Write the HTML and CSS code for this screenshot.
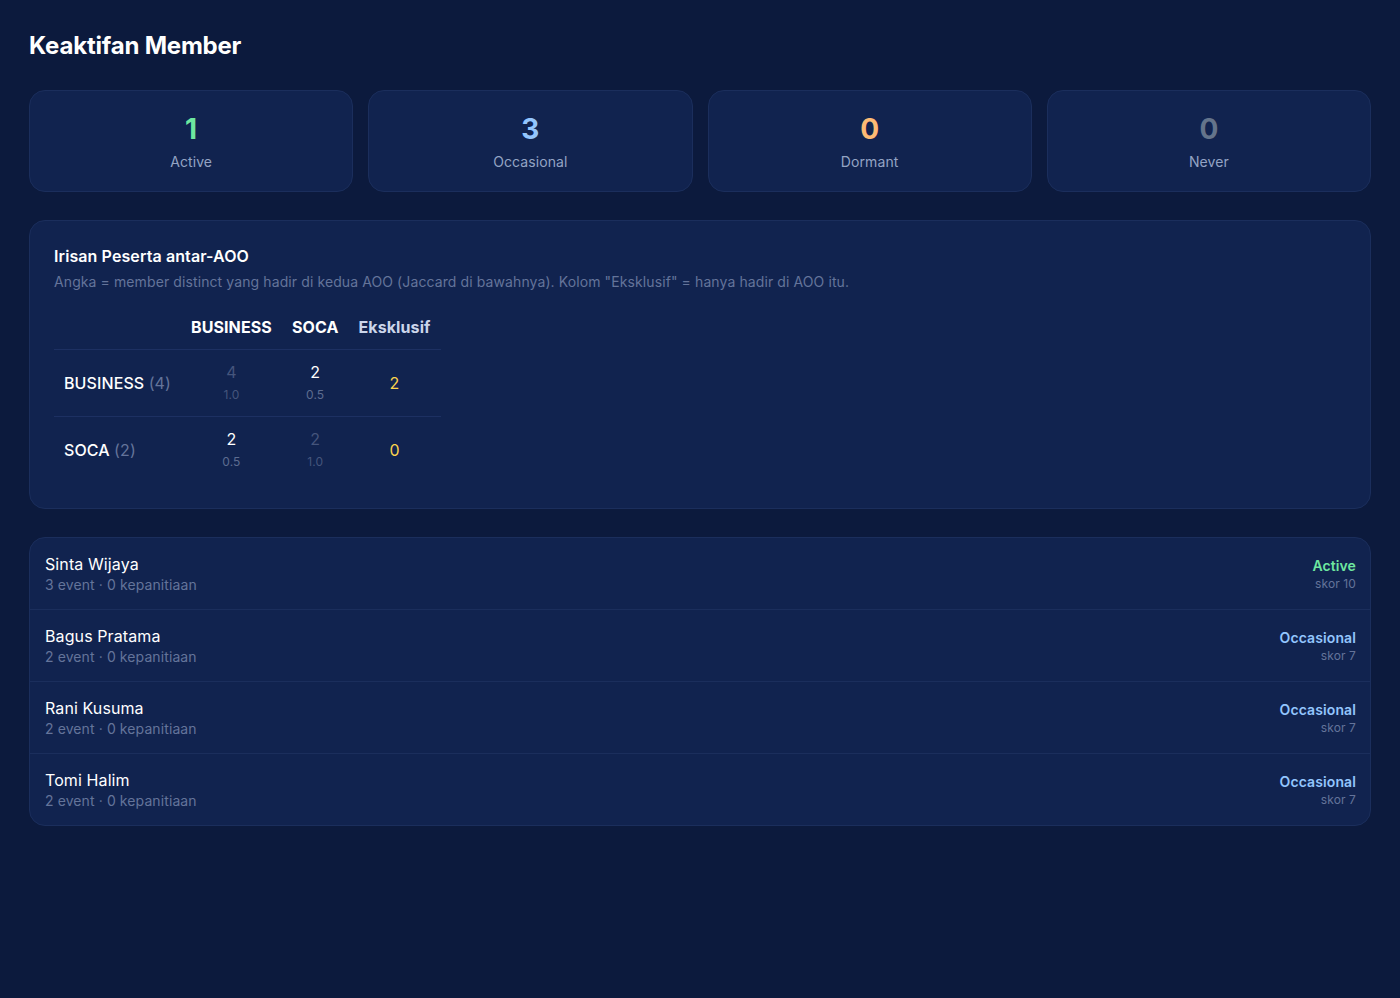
FILE: index.html
```html
<!DOCTYPE html>
<html>
<head>
    <meta charset="utf-8">
    <title>Keaktifan Member</title>
    <link rel="stylesheet" href="styles.css">
</head>
<body>
    <h1>Keaktifan Member</h1>

    <div class="stats">
        <div class="stat">
            <div class="stat-num active">1</div>
            <div class="stat-label">Active</div>
        </div>
        <div class="stat">
            <div class="stat-num occasional">3</div>
            <div class="stat-label">Occasional</div>
        </div>
        <div class="stat">
            <div class="stat-num dormant">0</div>
            <div class="stat-label">Dormant</div>
        </div>
        <div class="stat">
            <div class="stat-num never">0</div>
            <div class="stat-label">Never</div>
        </div>
    </div>

    <div class="panel overlap">
        <h2>Irisan Peserta antar-AOO</h2>
        <p class="hint">Angka = member distinct yang hadir di kedua AOO (Jaccard di bawahnya). Kolom "Eksklusif" = hanya hadir di AOO itu.</p>

        <table class="matrix">
            <thead>
                <tr>
                    <th></th>
                    <th>BUSINESS</th>
                    <th>SOCA</th>
                    <th class="excl-head">Eksklusif</th>
                </tr>
            </thead>
            <tbody>
                <tr>
                    <td class="row-name">BUSINESS <span class="count">(4)</span></td>
                    <td class="cell self"><div class="val">4</div><div class="jac">1.0</div></td>
                    <td class="cell"><div class="val">2</div><div class="jac">0.5</div></td>
                    <td class="excl">2</td>
                </tr>
                <tr>
                    <td class="row-name">SOCA <span class="count">(2)</span></td>
                    <td class="cell"><div class="val">2</div><div class="jac">0.5</div></td>
                    <td class="cell self"><div class="val">2</div><div class="jac">1.0</div></td>
                    <td class="excl">0</td>
                </tr>
            </tbody>
        </table>
    </div>

    <div class="panel members">
        <div class="member">
            <div>
                <div class="name">Sinta Wijaya</div>
                <div class="meta">3 event · 0 kepanitiaan</div>
            </div>
            <div class="status">
                <div class="tag active">Active</div>
                <div class="score">skor 10</div>
            </div>
        </div>
        <div class="member">
            <div>
                <div class="name">Bagus Pratama</div>
                <div class="meta">2 event · 0 kepanitiaan</div>
            </div>
            <div class="status">
                <div class="tag occasional">Occasional</div>
                <div class="score">skor 7</div>
            </div>
        </div>
        <div class="member">
            <div>
                <div class="name">Rani Kusuma</div>
                <div class="meta">2 event · 0 kepanitiaan</div>
            </div>
            <div class="status">
                <div class="tag occasional">Occasional</div>
                <div class="score">skor 7</div>
            </div>
        </div>
        <div class="member">
            <div>
                <div class="name">Tomi Halim</div>
                <div class="meta">2 event · 0 kepanitiaan</div>
            </div>
            <div class="status">
                <div class="tag occasional">Occasional</div>
                <div class="score">skor 7</div>
            </div>
        </div>
    </div>
</body>
</html>
```

FILE: styles.css
```css
body {
    margin: 0;
    padding: 29px 29px;
    background-color: #0c1a3d;
    color: #f1f5f9;
    font-family: Inter, "Noto Sans", sans-serif;
    letter-spacing: 0.1px;
}

h1 {
    font-size: 24px;
    font-weight: 700;
    letter-spacing: -0.2px;
    margin: 2px 0 30px;
    color: #ffffff;
}

.stats {
    display: grid;
    grid-template-columns: repeat(4, 1fr);
    gap: 15px;
    margin-bottom: 28px;
}

.stat {
    height: 100px;
    background-color: #11234f;
    border: 1px solid #1b2e5c;
    border-radius: 16px;
    display: flex;
    flex-direction: column;
    align-items: center;
    justify-content: center;
}

.stat-num {
    font-size: 28px;
    font-weight: 700;
    line-height: 34px;
}

.stat-label {
    font-size: 14px;
    color: #94a3c4;
    margin-top: 7px;
}

.active { color: #6ee7a0; }
.occasional { color: #93c5fd; }
.dormant { color: #fdba74; }
.never { color: #64748b; }

.panel {
    background-color: #11234f;
    border: 1px solid #1b2e5c;
    border-radius: 16px;
}

.overlap {
    padding: 24px 24px 25px;
    margin-bottom: 28px;
}

h2 {
    font-size: 16px;
    font-weight: 600;
    margin: 1px 0 7px;
    color: #ffffff;
}

.hint {
    font-size: 14px;
    color: #64749a;
    margin: 0 0 17px;
}

.matrix {
    border-collapse: collapse;
}

.matrix th {
    font-size: 16px;
    font-weight: 700;
    color: #ffffff;
    padding: 10px 10px 12px;
    line-height: 20px;
    text-align: center;
}

.matrix th.excl-head {
    color: #cbd5ea;
}

.matrix tbody tr {
    border-top: 1px solid #1d3062;
}

.matrix td {
    padding: 10px 10px 10px;
    text-align: center;
}

.row-name {
    text-align: left !important;
    font-size: 16px;
    font-weight: 500;
    color: #ffffff;
    padding-right: 10px !important;
}

.count {
    color: #64749a;
    font-weight: 400;
}

.val {
    font-size: 16px;
    line-height: 24px;
    color: #ffffff;
}

.jac {
    font-size: 12px;
    line-height: 22px;
    color: #5d6c90;
}

.self .val {
    color: #45557c;
}

.self .jac {
    color: #45557c;
}

.excl {
    font-size: 16px;
    color: #fcd34d;
}

.member {
    display: flex;
    justify-content: space-between;
    align-items: center;
    height: 69px;
    padding: 2px 14px 0 15px;
    border-top: 1px solid #1b2e5c;
}

.member:first-child {
    border-top: none;
}

.name {
    font-size: 16px;
    line-height: 20px;
    color: #ffffff;
}

.meta {
    font-size: 14px;
    line-height: 20px;
    margin-top: 1px;
    color: #64749a;
}

.status {
    text-align: right;
}

.tag {
    font-size: 14px;
    font-weight: 600;
    line-height: 18px;
}

.score {
    font-size: 12px;
    line-height: 18px;
    color: #64749a;
}
```
